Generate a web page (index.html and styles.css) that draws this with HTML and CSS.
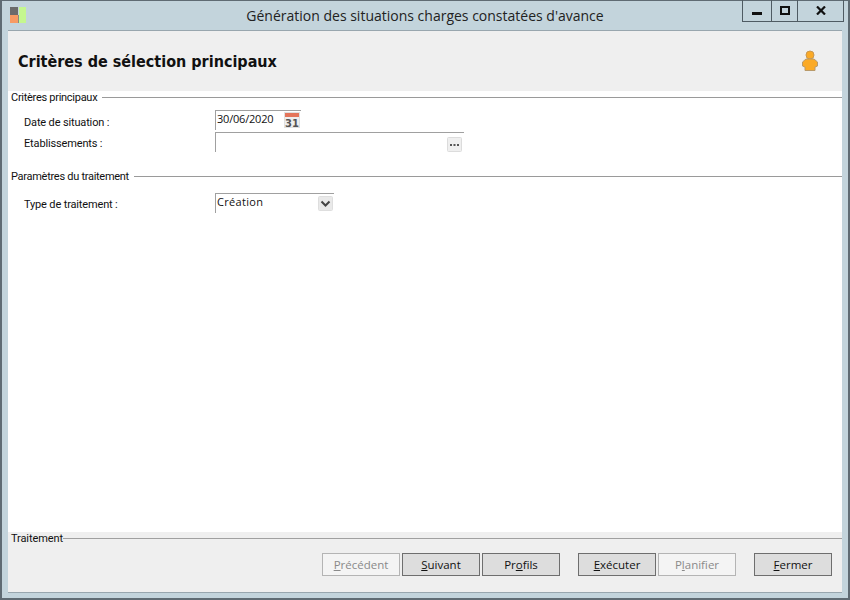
FILE: index.html
```html
<!DOCTYPE html>
<html lang="fr">
<head>
<meta charset="utf-8">
<title>Génération des situations charges constatées d'avance</title>
<link rel="stylesheet" href="styles.css">
</head>
<body>
<div class="window">
  <div class="titlebar">
    <svg class="app-icon" width="16" height="16" viewBox="0 0 16 16">
      <rect x="0" y="0" width="8" height="8" fill="#6b6b6b"/>
      <rect x="0" y="8" width="8" height="8" fill="#f79a63"/>
      <rect x="8" y="8" width="1" height="8" fill="#8a8a80"/>
      <rect x="9" y="0" width="7" height="16" fill="#c5f78f"/>
    </svg>
    <div class="title">Génération des situations charges constatées d'avance</div>
    <div class="controls">
      <div class="ctl ctl-min"><span class="min-glyph"></span></div>
      <div class="ctl ctl-max"><span class="max-glyph"></span></div>
      <div class="ctl ctl-close">
        <svg width="10" height="9" viewBox="0 0 10 9"><path d="M1 0.5 L9 8.5 M9 0.5 L1 8.5" stroke="#111" stroke-width="2.2" fill="none"/></svg>
      </div>
    </div>
  </div>
  <div class="client">
    <div class="header">
      <h1>Critères de sélection principaux</h1>
      <svg class="user-icon" width="18" height="22" viewBox="0 0 18 22">
        <circle cx="9" cy="5" r="4" fill="#fbaa26" stroke="#c9974f" stroke-width="1"/>
        <path d="M5 9 H13 L16.500 12 V16 L14 17 V20.500 H4 V17 L1.500 16 V12 Z" fill="#fbaa26" stroke="#b99a6a" stroke-width="1"/>
      </svg>
    </div>
    <div class="content">
      <div class="legend"><span>Critères principaux</span><i></i></div>
      <div class="row row-date">
        <label>Date de situation :</label>
        <div class="field field-date">
          <span class="value value-date">30/06/2020</span>
          <svg class="ibtn" width="16" height="16" viewBox="0 0 16 16">
            <rect x="0.500" y="0.500" width="15" height="15" fill="#eeeeee" stroke="#e0e0e0"/>
            <rect x="1" y="1" width="14" height="4" fill="#e4745a"/>
            <text x="8" y="14.500" text-anchor="middle" class="cal">31</text>
          </svg>
        </div>
      </div>
      <div class="row row-etab">
        <label>Etablissements :</label>
        <div class="field field-etab">
          <span class="value"></span>
          <svg class="ibtn" width="15" height="15" viewBox="0 0 15 15">
            <rect x="0.500" y="0.500" width="14" height="14" rx="1" fill="#efefef" stroke="#dcdcdc"/>
            <path d="M3 8 H5 M6.500 8 H8.500 M10 8 H12" stroke="#555" stroke-width="2"/>
          </svg>
        </div>
      </div>
      <div class="legend legend-params"><span>Paramètres du traitement</span><i></i></div>
      <div class="row row-type">
        <label>Type de traitement :</label>
        <div class="field field-type">
          <span class="value">Création</span>
          <svg class="ibtn" width="15" height="15" viewBox="0 0 15 15">
            <rect x="0.500" y="0.500" width="14" height="14" rx="1" fill="#e9e9e9" stroke="#dedede"/>
            <path d="M3.500 5.500 L7.500 9.500 L11.500 5.500" stroke="#444" stroke-width="2" fill="none"/>
          </svg>
        </div>
      </div>
    </div>
    <div class="footer">
      <div class="legend legend-footer"><span>Traitement</span><i></i></div>
      <div class="buttons">
        <button class="btn" disabled><u>P</u>récédent</button>
        <button class="btn"><u>S</u>uivant</button>
        <button class="btn">Pr<u>o</u>fils</button>
        <button class="btn gap-a"><u>E</u>xécuter</button>
        <button class="btn" disabled>P<u>l</u>anifier</button>
        <button class="btn gap-b"><u>F</u>ermer</button>
      </div>
    </div>
  </div>
</div>
</body>
</html>
```
FILE: styles.css
```css
* { box-sizing: border-box; }
html, body { margin: 0; padding: 0; }
body { width: 850px; height: 600px; overflow: hidden; font-family: Roboto, "Open Sans", sans-serif; color: #111; }
.window {
  width: 850px; height: 600px; display: flex; flex-direction: column;
  background: #c3d4dc; border: 2px solid #5f6b73; border-top-width: 1px; border-bottom-width: 2px;
}
.titlebar { height: 29px; flex: none; display: flex; align-items: flex-start; position: relative; }
.app-icon { margin: 6px 0 0 8px; flex: none; }
.title { position: absolute; left: 0; right: 0; top: 5px; text-align: center; font-size: 14px; line-height: 20px; font-family: "Open Sans", sans-serif; color: #222; }
.controls { position: absolute; top: -1px; left: 740px; display: flex; height: 22px; border: 1px solid #4f5b63; border-top: 0; }
.ctl { display: flex; align-items: center; justify-content: center; border-left: 1px solid #4f5b63; }
.ctl-min { width: 28px; border-left: 0; }
.ctl-max { width: 26px; }
.ctl-close { width: 46px; }
.min-glyph { display: block; width: 10px; height: 3px; background: #111; margin-top: 5px; }
.max-glyph { display: block; width: 10px; height: 9px; border: 2px solid #111; }
.client { margin: 0 6px 5px; border-top: 1px solid #98a6ae; border-bottom: 1px solid #98a6ae; flex: 1; display: flex; flex-direction: column; background: #fff; min-height: 0; }
.header { height: 60px; flex: none; background: #efefef; display: flex; align-items: center; justify-content: space-between; padding: 0 23px 0 10px; }
h1 { margin: 0; font-family: "DejaVu Sans", sans-serif; font-stretch: condensed; font-size: 16px; font-weight: 700; color: #111; }
.user-icon { flex: none; }
.content { flex: 1; }
.legend { display: flex; align-items: center; height: 12px; padding-left: 3px; font-size: 11px; line-height: 12px; color: #111; letter-spacing: -0.280px; }
.legend span { margin-top: 2px; }
.legend i { flex: 1; height: 1px; background: #9a9a9a; margin-left: 5px; }
.legend-params { margin-top: 18px; }
.legend-footer span { margin-top: 0; letter-spacing: -0.100px; }
.legend-footer i { margin-left: 0; background: #a0a0a0; }
.row { display: flex; align-items: flex-start; padding-left: 16px; }
.row label { width: 191px; flex: none; font-size: 11px; line-height: 16px; padding-top: 4px; letter-spacing: -0.150px; }
.row-date { margin-top: 7px; height: 22px; }
.row-date label { padding-top: 5px; }
.row-type { margin-top: 11px; }
.field { height: 20px; border-top: 1px solid #a0a0a0; border-left: 1px solid #a0a0a0; display: flex; align-items: flex-start; justify-content: space-between; padding-top: 1px; }
.value { font-size: 11px; line-height: 14px; padding-left: 1px; font-family: "Open Sans", sans-serif; }
.value-date { letter-spacing: -0.200px; }
.ibtn { display: block; }
.cal { font-family: "DejaVu Sans", sans-serif; font-weight: 700; font-size: 10px; fill: #555; }
.field-date { width: 86px; padding-right: 1px; }
.field-etab { width: 249px; padding: 4px 2px 0 0; }
.field-type { width: 119px; padding-right: 1px; }
.field-type .ibtn { margin-top: 1px; }
.field-type .value { letter-spacing: 0.300px; }
.footer { height: 60px; flex: none; background: #efefef; }
.legend-footer { height: 13px; }
.buttons { display: flex; gap: 2px; margin-top: 8px; padding-left: 314px; }
.btn { width: 78px; height: 23px; border: 1px solid #6e6e6e; background: #dddddd; font-family: "Open Sans", sans-serif; font-size: 11.500px; color: #111; padding: 0; }
.btn:disabled { background: #f4f4f4; border-color: #b4b4b4; color: #8a8a8a; }
.gap-a { margin-left: 16px; }
.gap-b { margin-left: 16px; }
```
